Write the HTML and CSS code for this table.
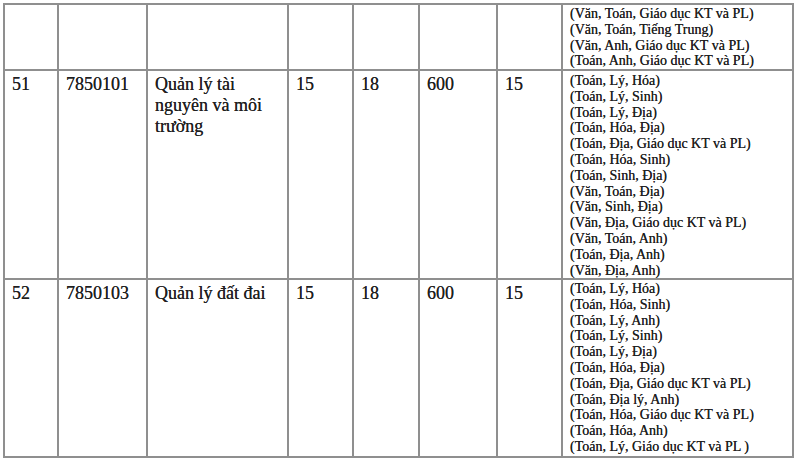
FILE: index.html
```html
<!DOCTYPE html>
<html lang="vi">
<head>
<meta charset="utf-8">
<title>Bảng ngành tuyển sinh</title>
<link rel="stylesheet" href="styles.css">
</head>
<body>
<div class="sheet">
  <div class="cell"></div>
  <div class="cell"></div>
  <div class="cell"></div>
  <div class="cell"></div>
  <div class="cell"></div>
  <div class="cell"></div>
  <div class="cell"></div>
  <div class="cell subjects subjects-top">
    <div>(Văn, Toán, Giáo dục KT và PL)</div>
    <div>(Văn, Toán, Tiếng Trung)</div>
    <div>(Văn, Anh, Giáo dục KT và PL)</div>
    <div>(Toán, Anh, Giáo dục KT và PL)</div>
  </div>

  <div class="cell big">51</div>
  <div class="cell big">7850101</div>
  <div class="cell big">Quản lý tài nguyên và môi trường</div>
  <div class="cell big">15</div>
  <div class="cell big">18</div>
  <div class="cell big">600</div>
  <div class="cell big">15</div>
  <div class="cell subjects">
    <div>(Toán, Lý, Hóa)</div>
    <div>(Toán, Lý, Sinh)</div>
    <div>(Toán, Lý, Địa)</div>
    <div>(Toán, Hóa, Địa)</div>
    <div>(Toán, Địa, Giáo dục KT và PL)</div>
    <div>(Toán, Hóa, Sinh)</div>
    <div>(Toán, Sinh, Địa)</div>
    <div>(Văn, Toán, Địa)</div>
    <div>(Văn, Sinh, Địa)</div>
    <div>(Văn, Địa, Giáo dục KT và PL)</div>
    <div>(Văn, Toán, Anh)</div>
    <div>(Toán, Địa, Anh)</div>
    <div>(Văn, Địa, Anh)</div>
  </div>

  <div class="cell big">52</div>
  <div class="cell big">7850103</div>
  <div class="cell big">Quản lý đất đai</div>
  <div class="cell big">15</div>
  <div class="cell big">18</div>
  <div class="cell big">600</div>
  <div class="cell big">15</div>
  <div class="cell subjects subjects-last">
    <div>(Toán, Lý, Hóa)</div>
    <div>(Toán, Hóa, Sinh)</div>
    <div>(Toán, Lý, Anh)</div>
    <div>(Toán, Lý, Sinh)</div>
    <div>(Toán, Lý, Địa)</div>
    <div>(Toán, Hóa, Địa)</div>
    <div>(Toán, Địa, Giáo dục KT và PL)</div>
    <div>(Toán, Địa lý, Anh)</div>
    <div>(Toán, Hóa, Giáo dục KT và PL)</div>
    <div>(Toán, Hóa, Anh)</div>
    <div>(Toán, Lý, Giáo dục KT và PL )</div>
  </div>
</div>
</body>
</html>
```

FILE: styles.css
```css
html, body {
  margin: 0;
  padding: 0;
  background: #ffffff;
}

body {
  font-family: "Liberation Serif", "Times New Roman", serif;
  color: #1f1f1f;
}

.sheet {
  box-sizing: border-box;
  width: 791px;
  margin: 3px 0 0 3px;
  display: grid;
  grid-template-columns: 54px 89px 141px 65px 66px 78px 65px 231px;
  grid-template-rows: 66px 209px 178px;
  border-left: 2px solid #8f8f8f;
  border-top: 2px solid #8f8f8f;
}

.cell {
  box-sizing: border-box;
  border-right: 2px solid #8f8f8f;
  border-bottom: 2px solid #8f8f8f;
  padding: 3px 6px 0 8px;
  overflow: hidden;
}

.big {
  font-size: 18px;
  line-height: 21px;
  padding-left: 7px;
}

.subjects {
  font-size: 14px;
  line-height: 15.8px;
  padding: 2px 4px 0 7px;
  white-space: nowrap;
  text-shadow: 0 0 0.4px #333;
}

.subjects-top {
  padding-top: 1px;
}

.subjects-last {
  padding-top: 1px;
}

.big {
  text-shadow: 0 0 0.4px #333;
}
```
